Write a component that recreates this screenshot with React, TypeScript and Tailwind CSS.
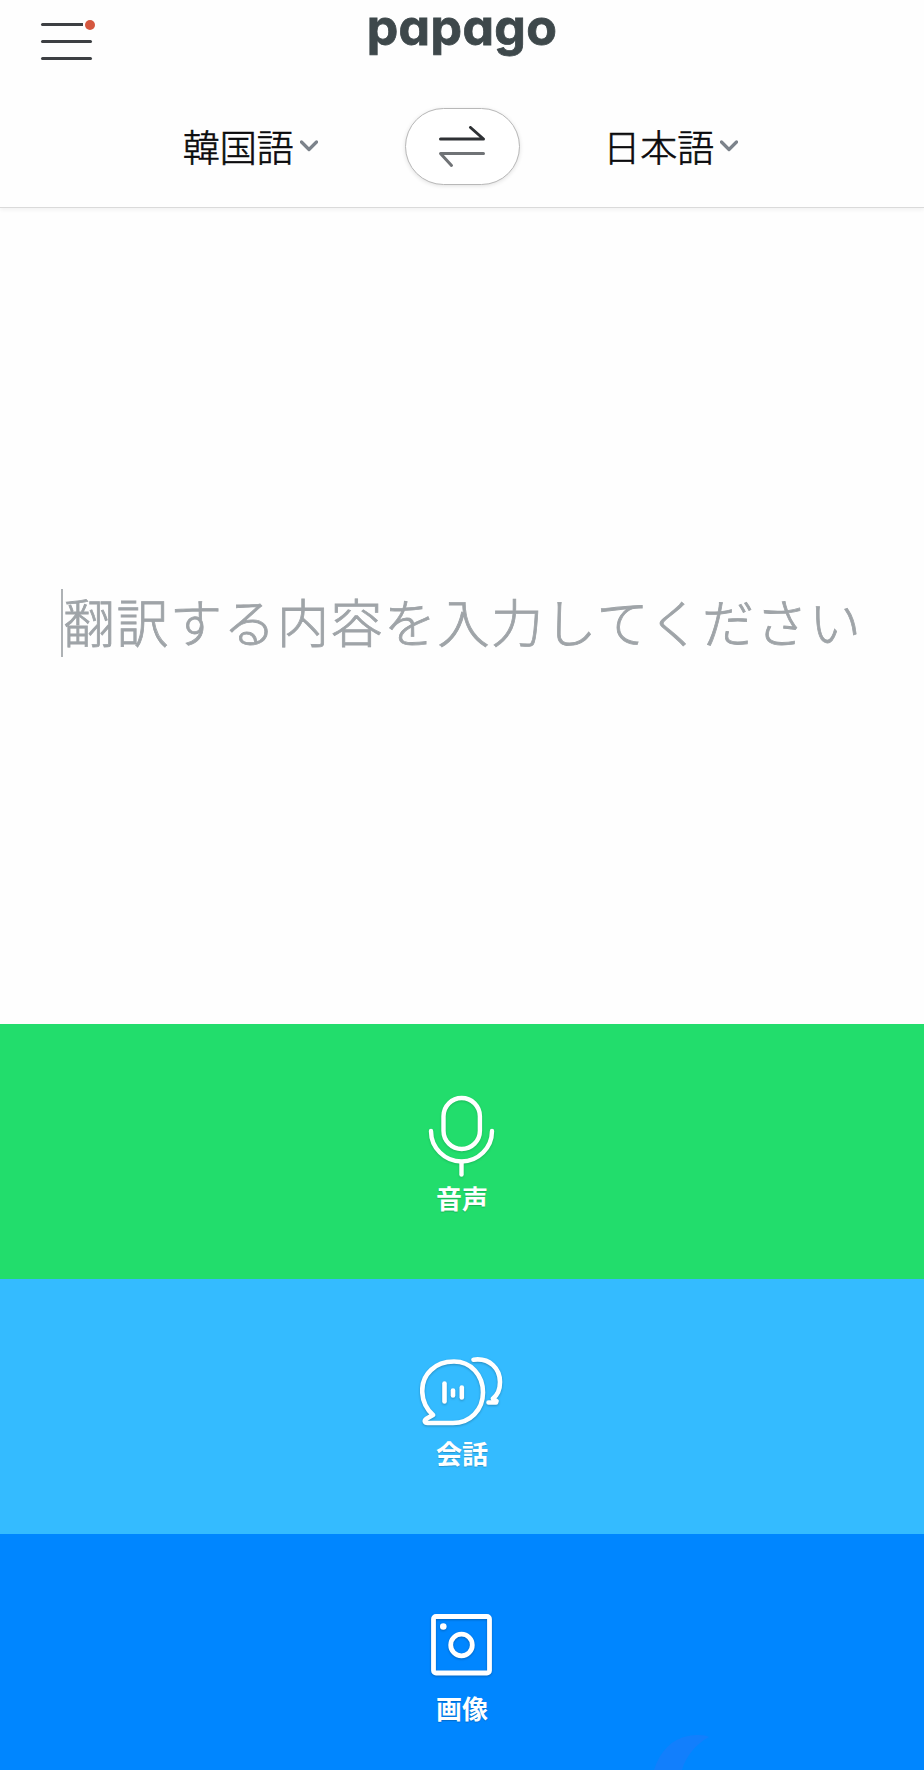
import React from "react";

const fontJp = "font-['Noto_Sans_CJK_JP','Noto_Sans',sans-serif]";

const Language = ({ name }: any) => {
  return (
    <button className="flex items-center gap-[6px]">
      <span className="text-[37px] leading-[54px] font-light text-[#0b0b0d] [-webkit-text-stroke:0.6px_#0b0b0d]">{name}</span>
      <svg width="18" height="12" viewBox="0 0 18 12" fill="none">
        <path d="M1.5 2 L9 9.5 L16.5 2" stroke="#7c838b" strokeWidth="3.2" strokeLinecap="round" strokeLinejoin="round" />
      </svg>
    </button>
  );
};

const MicIcon = () => (
  <svg width="84" height="84" viewBox="0 0 84 84" fill="none" stroke="#fff" strokeWidth="4.4" strokeLinecap="round" className="drop-shadow-[0_1px_1px_rgba(0,0,0,0.15)]">
    <rect x="23.5" y="4" width="36.4" height="51" rx="18.2" />
    <path d="M11 37 A30.5 30.5 0 0 0 72 37" />
    <path d="M41.5 68 V80.5" />
  </svg>
);

const TalkIcon = () => (
  <svg width="84" height="84" viewBox="0 0 84 84" fill="none" stroke="#fff" strokeWidth="4.6" strokeLinecap="round" strokeLinejoin="round" className="drop-shadow-[0_1px_1px_rgba(0,0,0,0.25)]">
    <path d="M33 68 H7.5 C4.5 68 4 65.5 6 64 L13 60 C-1 47 -1 26 11 15 C19 7 28 6.5 34 6.5 C51 6.5 63 20 63 37.5 C63 55 50 68 33 68 Z" />
    <path d="M53.5 4.7 C70 2.5 80 14 80 27 C80 34 77.5 40 73 43.5 L76.5 46 L76 47.5 L68.5 47.5" />
    <path d="M24.5 28.5 V46.5" />
    <path d="M33 35.5 V40.5" />
    <path d="M41.8 32.5 V42.5" />
  </svg>
);

const ImageIcon = () => (
  <svg width="84" height="84" viewBox="0 0 84 84" fill="none" stroke="#fff" strokeWidth="4.8" className="drop-shadow-[0_1px_1px_rgba(0,0,0,0.25)]">
    <rect x="13.5" y="12.5" width="56" height="56.5" rx="2.5" />
    <circle cx="41.5" cy="41" r="10.8" />
    <circle cx="23.3" cy="22.5" r="3.3" fill="#fff" stroke="none" />
  </svg>
);

const App = () => {
  return (
    <div className={`flex h-[1770px] w-full flex-col overflow-hidden bg-[#fefefe] ${fontJp}`}>
      <header className="h-[208px] shrink-0 border-b border-[#dadada] bg-[#fefefe] shadow-[0_2px_4px_rgba(0,0,0,0.05)]">
        <div className="grid h-[83px] grid-cols-3">
          <div className="pt-[23px] pl-[41px]">
            <button className="relative flex h-[37px] w-[51px] flex-col justify-between">
              <span className="h-[3px] w-[42px] rounded-l-full bg-[#3d4043]" />
              <span className="h-[3px] w-full rounded-full bg-[#3d4043]" />
              <span className="h-[3px] w-full rounded-full bg-[#3d4043]" />
              <span className="absolute -top-[3px] left-[44px] size-[10px] rounded-full bg-[#d5573f]" />
            </button>
          </div>
          <h1 className="text-center font-['Inter',sans-serif] text-[50px] leading-[54px] font-bold tracking-[0.4px] text-[#3e484b] [font-feature-settings:'cv11'] [-webkit-text-stroke:0.8px_#3e484b]">
            papago
          </h1>
        </div>
        <div className="mt-6 grid grid-cols-[1fr_115px_1fr] items-center">
          <div className="flex justify-center pl-[96px]">
            <Language name="韓国語" />
          </div>
          <button className="mt-px flex h-[77px] items-center justify-center rounded-full border border-[#b8b8b8] bg-white shadow-[0_1px_4px_rgba(0,0,0,0.12)]">
            <svg width="46" height="42" viewBox="0 0 46 42" fill="none" strokeWidth="3" strokeLinecap="round" strokeLinejoin="round">
              <path d="M1.5 13 H44.5 L31.5 1.5" stroke="#2e3134" />
              <path d="M44.5 27.5 H1.5 L12.5 39.5" stroke="#707376" />
            </svg>
          </button>
          <div className="flex justify-center pr-[102px]">
            <Language name="日本語" />
          </div>
        </div>
      </header>

      <main className="flex h-[816px] shrink-0 items-start pt-[381px] pl-[61px]">
        <span className="h-[68px] w-[2px] bg-[#aeb2b5]" />
        <p className="-mt-[2px] text-[52px] leading-[68px] font-light tracking-[1.5px] whitespace-nowrap text-[#9fa4a8] [-webkit-text-stroke:0.8px_#9fa4a8]">
          翻訳する内容を入力してください
        </p>
      </main>

      <button className="flex h-[255px] shrink-0 flex-col items-center bg-[#22dd6c] pt-[70px] text-white">
        <MicIcon />
        <span className="mt-[5px] text-[26px] leading-[30px] font-bold text-shadow-[0_1px_1px_rgba(0,0,0,0.2)]">音声</span>
      </button>
      <button className="flex h-[255px] shrink-0 flex-col items-center bg-[#34bbff] pt-[76px] text-white">
        <TalkIcon />
        <span className="-mt-px text-[26px] leading-[30px] font-bold text-shadow-[0_1px_1px_rgba(0,0,0,0.2)]">会話</span>
      </button>
      <button className="relative flex h-[236px] shrink-0 flex-col items-center overflow-hidden bg-[#0086ff] pt-[70px] text-white">
        <ImageIcon />
        <span className="mt-[5px] text-[26px] leading-[30px] font-bold text-shadow-[0_1px_1px_rgba(0,0,0,0.2)]">画像</span>
        <svg className="absolute bottom-0 left-[652px]" width="58" height="36" viewBox="0 0 58 36">
          <path d="M2 36 C8 17 20 5 36 2 C46 0 54 1 57 3 C44 10 34 22 30 36 Z" fill="#127ffc" />
        </svg>
      </button>
    </div>
  );
};

export default App;
